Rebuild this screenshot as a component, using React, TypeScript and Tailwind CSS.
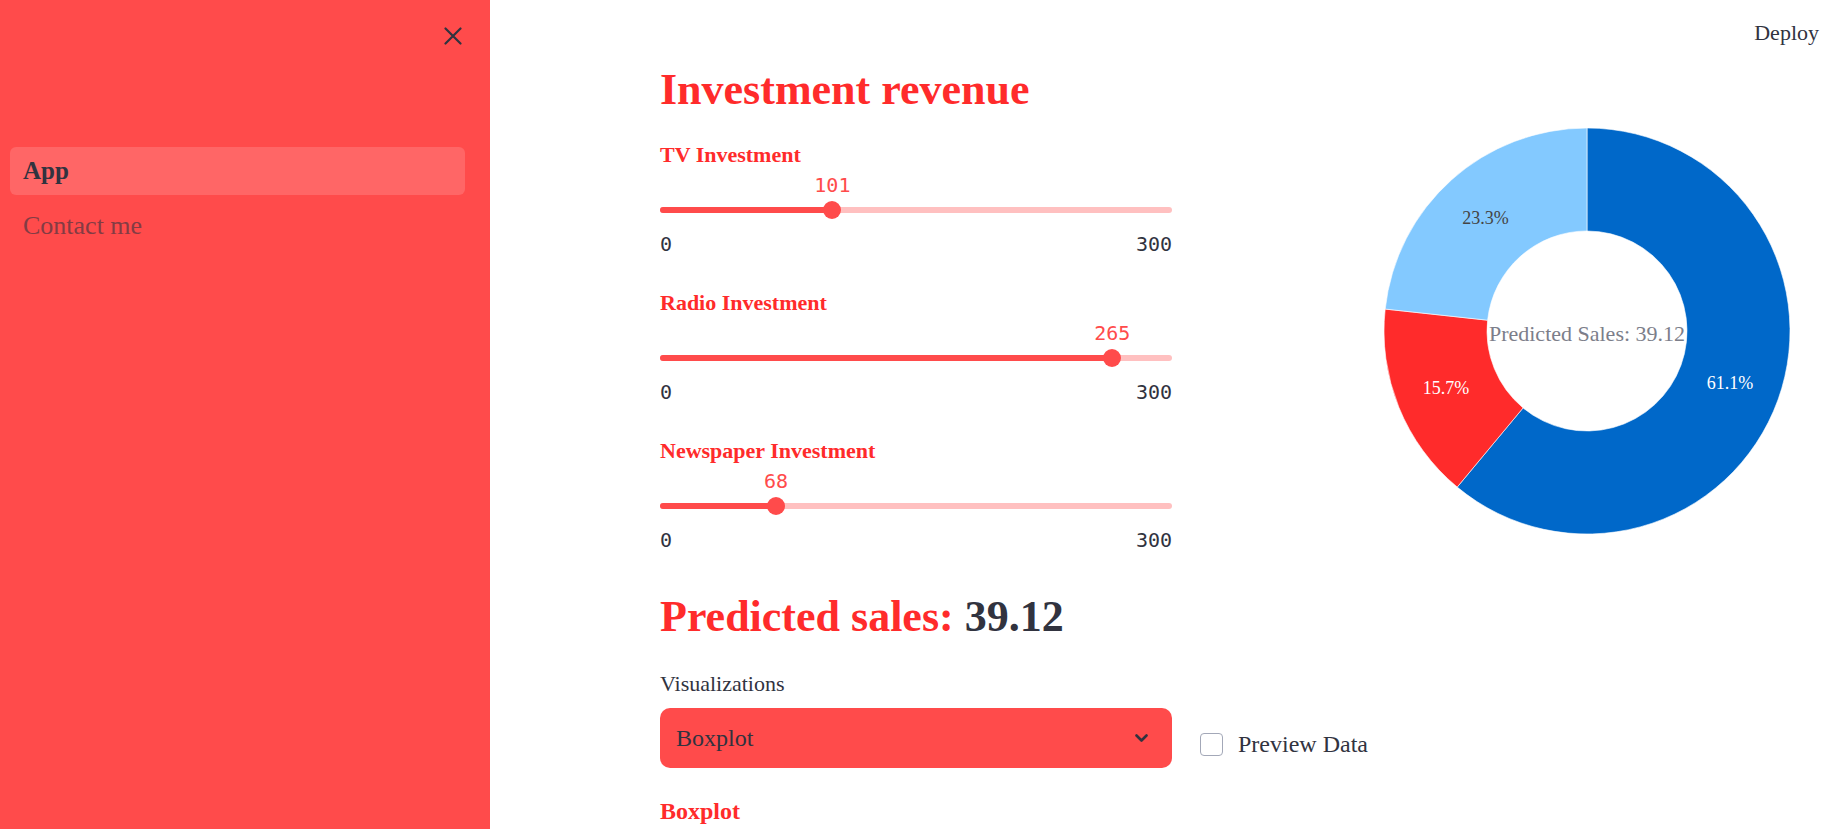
import React from "react";

const slices = [
    { pct: 61.1, color: "#0068c9", text: "#ffffff" },
    { pct: 15.7, color: "#ff2b2b", text: "#ffffff" },
    { pct: 23.3, color: "#83c9ff", text: "#444444" },
];

const C = 205;
const R = 203;
const HOLE = 100;

const pt = (deg: number, rad: number) => {
    const a = (deg * Math.PI) / 180;
    return [C + rad * Math.sin(a), C - rad * Math.cos(a)];
};

const arcPath = (a0: number, a1: number) => {
    const large = a1 - a0 > 180 ? 1 : 0;
    const [x0, y0] = pt(a0, R);
    const [x1, y1] = pt(a1, R);
    const [x2, y2] = pt(a1, HOLE);
    const [x3, y3] = pt(a0, HOLE);
    return `M${x0} ${y0} A${R} ${R} 0 ${large} 1 ${x1} ${y1} L${x2} ${y2} A${HOLE} ${HOLE} 0 ${large} 0 ${x3} ${y3} Z`;
};

const Donut: React.FC = () => {
    const total = slices.reduce((s, x) => s + x.pct, 0);
    let start = 0;
    return (
        <svg width={410} height={410} viewBox="0 0 410 410">
            {slices.map((s) => {
                const sweep = (s.pct / total) * 360;
                const a0 = start;
                const a1 = start + sweep;
                start = a1;
                const [tx, ty] = pt((a0 + a1) / 2, 152);
                return (
                    <g key={s.pct}>
                        <path d={arcPath(a0, a1)} fill={s.color} stroke="#ffffff" strokeWidth={0.6} />
                        <text x={tx} y={ty} fill={s.text} fontSize={18} fontFamily="'Liberation Serif', serif" textAnchor="middle" dominantBaseline="central">
                            {s.pct}%
                        </text>
                    </g>
                );
            })}
            <text x={C} y={C + 2} fill="#7c7e8a" fontSize={22} fontFamily="'Liberation Serif', serif" textAnchor="middle" dominantBaseline="central">
                Predicted Sales: 39.12
            </text>
        </svg>
    );
};

// block is 112px tall, the gap to the next one comes from mb (margins collapse)
const Slider: React.FC<{ label: string; value: number; max?: number }> = ({ label, value, max = 300 }) => {
    const pct = (value / max) * 100;
    return (
        <div className="mb-[36px]">
            <div className="h-[26px] text-[22px] leading-[26px] font-bold text-[#ff2b2b]">{label}</div>
            <div className="relative mt-[7px] h-[20px] font-['DejaVu_Sans_Mono',monospace]">
                <span className="absolute -translate-x-1/2 text-[20px] leading-[20px] text-[#ff4b4b]" style={{ left: `${pct}%` }}>
                    {value}
                </span>
            </div>
            <div className="relative mt-[6px] flex h-[18px] items-center">
                <div className="h-[6px] w-full rounded-full bg-[#ffc0c0]">
                    <div className="h-full rounded-full bg-[#ff4b4b]" style={{ width: `${pct}%` }} />
                </div>
                <div className="absolute size-[18px] -translate-x-1/2 rounded-full bg-[#ff4b4b]" style={{ left: `${pct}%` }} />
            </div>
            <div className="mt-[15px] flex h-[20px] justify-between font-['DejaVu_Sans_Mono',monospace] text-[20px] leading-[20px] text-[#31333f]">
                <span>0</span>
                <span>{max}</span>
            </div>
        </div>
    );
};

const App: React.FC = () => {
    return (
        <div className="flex h-[829px] w-full overflow-hidden bg-white font-['Liberation_Serif',serif] text-[#31333f]">
            <aside className="flex w-[490px] shrink-0 flex-col bg-[#ff4b4b]">
                <div className="flex h-[72px] items-center justify-end pr-[28px]">
                    <svg width="18" height="18" viewBox="0 0 18 18" fill="none" stroke="#31333f" strokeWidth="2.2" strokeLinecap="round">
                        <path d="M1.5 1.5 16.5 16.5M16.5 1.5 1.5 16.5" />
                    </svg>
                </div>
                <nav className="mt-[75px] flex flex-col gap-[6px] pl-[10px] pr-[25px]">
                    <div className="flex h-[48px] items-center rounded-[6px] bg-[#ff6666] px-[13px] text-[25px] font-bold">App</div>
                    <div className="flex h-[48px] items-center px-[13px] text-[26px] text-[#833c44]">Contact me</div>
                </nav>
            </aside>

            <main className="flex min-w-0 flex-1 flex-col">
                <header className="flex h-[64px] shrink-0 items-center justify-end pr-[9px] text-[22px]">Deploy</header>

                <div className="flex pl-[170px]">
                    <div className="w-[512px] shrink-0">
                        <h1 className="text-[44px] leading-[52px] font-bold text-[#ff2b2b]">Investment revenue</h1>

                        <div className="mt-[26px]">
                            <Slider label="TV Investment" value={101} />
                            <Slider label="Radio Investment" value={265} />
                            <Slider label="Newspaper Investment" value={68} />
                        </div>

                        <h2 className="mt-[41px] text-[44px] leading-[52px] font-bold text-[#ff2b2b]">
                            Predicted sales: <span className="text-[#31333f]">39.12</span>
                        </h2>

                        <div className="mt-[28px] h-[26px] text-[22px] leading-[26px]">Visualizations</div>

                        <div className="mt-[11px] flex items-start">
                            <div className="flex h-[60px] w-[512px] shrink-0 items-center justify-between rounded-[10px] bg-[#ff4b4b] pl-[16px] pr-[24px] text-[24px]">
                                <span>Boxplot</span>
                                <svg width="13" height="9" viewBox="0 0 13 9" fill="none" stroke="#31333f" strokeWidth="2.6" strokeLinecap="round" strokeLinejoin="round">
                                    <path d="M1.5 1.5 6.5 6.5 11.5 1.5" />
                                </svg>
                            </div>
                            <div className="ml-[28px] mt-[24px] flex shrink-0 items-center gap-[15px]">
                                <div className="size-[23px] rounded-[4px] border border-[#a3a8b8] bg-white" />
                                <span className="text-[24px] leading-[24px] whitespace-nowrap">Preview Data</span>
                            </div>
                        </div>

                        <h3 className="mt-[29px] text-[24px] leading-[28px] font-bold text-[#ff2b2b]">Boxplot</h3>
                    </div>

                    <div className="ml-[210px] mt-[62px] shrink-0">
                        <Donut />
                    </div>
                </div>
            </main>
        </div>
    );
};

export default App;
